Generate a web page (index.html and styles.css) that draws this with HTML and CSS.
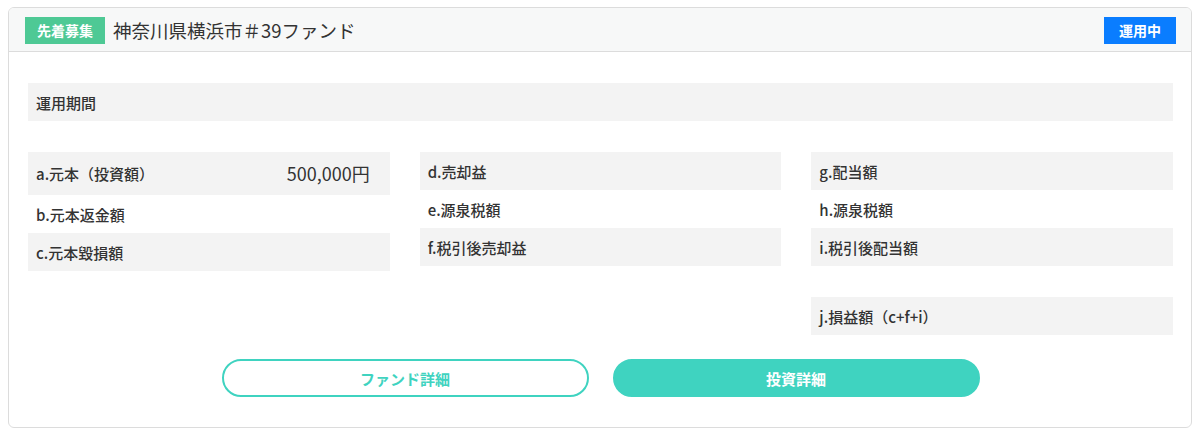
FILE: index.html
```html
<!DOCTYPE html>
<html lang="ja">
<head>
<meta charset="utf-8">
<link rel="stylesheet" href="styles.css">
</head>
<body>
<div class="card">
  <div class="card-header">
    <div class="header-left">
      <span class="badge badge-green">先着募集</span>
      <span class="title">神奈川県横浜市＃39ファンド</span>
    </div>
    <span class="badge badge-blue">運用中</span>
  </div>
  <div class="card-body">
    <div class="period">運用期間</div>
    <div class="grid">
      <div class="col">
        <div class="row shaded"><span class="label">a.元本（投資額）</span><span class="value">500,000円</span></div>
        <div class="row"><span class="label">b.元本返金額</span></div>
        <div class="row shaded"><span class="label">c.元本毀損額</span></div>
      </div>
      <div class="col">
        <div class="row shaded"><span class="label">d.売却益</span></div>
        <div class="row"><span class="label">e.源泉税額</span></div>
        <div class="row shaded"><span class="label">f.税引後売却益</span></div>
      </div>
      <div class="col">
        <div class="row shaded"><span class="label">g.配当額</span></div>
        <div class="row"><span class="label">h.源泉税額</span></div>
        <div class="row shaded"><span class="label">i.税引後配当額</span></div>
        <div class="row shaded total"><span class="label">j.損益額（c+f+i）</span></div>
      </div>
    </div>
    <div class="actions">
      <a class="btn btn-outline">ファンド詳細</a>
      <a class="btn btn-solid">投資詳細</a>
    </div>
  </div>
</div>
</body>
</html>
```

FILE: styles.css
```css
* { box-sizing: border-box; }
body {
  margin: 7px 8px;
  font-family: "Noto Sans CJK JP", "Noto Sans", sans-serif;
  color: #333;
  background: #fff;
}
.card {
  border: 1px solid #dcdcdc;
  border-radius: 6px;
  overflow: hidden;
}
.card-header {
  display: flex;
  justify-content: space-between;
  align-items: center;
  background: #f7f8f8;
  border-bottom: 1px solid #dcdcdc;
  height: 44px;
  padding: 1px 15px 0 16px;
}
.header-left {
  display: flex;
  align-items: center;
  gap: 8px;
}
.badge {
  display: inline-flex;
  align-items: center;
  justify-content: center;
  height: 27px;
  color: #fff;
  font-size: 14px;
  font-weight: 700;
}
.badge-green { background: #4ec995; width: 80px; }
.badge-blue { background: #0a7dff; width: 72px; }
.title {
  font-size: 18.5px;
  color: #333;
  line-height: 27px;
}
.card-body {
  padding: 31px 18px 30px 19px;
}
.period {
  background: #f3f3f3;
  height: 38px;
  display: flex;
  align-items: center;
  padding-left: 8px;
  font-size: 15px;
  font-weight: 500;
  color: #333;
}
.grid {
  display: grid;
  grid-template-columns: repeat(3, 1fr);
  column-gap: 30px;
  margin-top: 31px;
}
.col {
  display: flex;
  flex-direction: column;
}
.row {
  display: flex;
  justify-content: space-between;
  align-items: center;
  min-height: 38px;
  padding: 0 20px 0 8px;
}
.row.shaded { background: #f3f3f3; }
.row.total { margin-top: 31px; }
.label {
  font-size: 15px;
  font-weight: 500;
  color: #333;
}
.value {
  font-size: 18px;
  line-height: 43px;
  color: #333;
}
.actions {
  display: flex;
  justify-content: center;
  gap: 24px;
  margin-top: 24px;
}
.btn {
  display: flex;
  align-items: center;
  justify-content: center;
  width: 367px;
  height: 38px;
  border-radius: 19px;
  border: 2px solid #3fd3c0;
  font-size: 15px;
  font-weight: 700;
  text-decoration: none;
}
.btn-outline { background: #fff; color: #3fd3c0; }
.btn-solid { background: #3fd3c0; color: #fff; }
```
